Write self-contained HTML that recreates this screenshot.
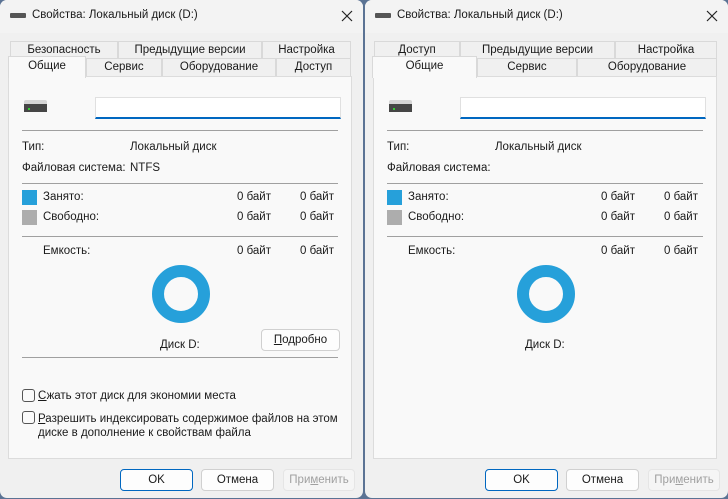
<!DOCTYPE html>
<html><head><meta charset="utf-8"><style>
*{margin:0;padding:0;box-sizing:border-box}
body{width:728px;height:499px;background:#5b7394;position:relative;overflow:hidden;font-family:"Liberation Sans","DejaVu Sans",sans-serif;font-size:11.5px;color:#1a1a1a}
.win{position:absolute;top:0;width:363px;height:498px;background:#f0f0f0;border-radius:7px;overflow:hidden}
.a{position:absolute;white-space:nowrap}
.tb{position:absolute;left:0;top:0;width:100%;height:33px;background:#f3f3f3}
.tab{position:absolute;height:18px;border:1px solid #d9d9d9;border-bottom:none;background:#f0f0f0;text-align:center;line-height:17px}
.sel{background:#f9f9f9;z-index:3;height:22px;line-height:19px}
.panel{position:absolute;left:8px;top:76px;width:344px;height:383px;background:#f9f9f9;border:1px solid #dcdcdc}
.hr{position:absolute;left:22px;width:316px;height:1px;background:#a0a0a0}
.btn{position:absolute;top:469px;height:22px;border:1px solid #d0d0d0;border-radius:4px;background:#fdfdfd;text-align:center;line-height:20px}
.r{text-align:right}
.cb{position:absolute;left:22px;width:13px;height:13px;border:1px solid #555;border-radius:3px;background:#fafafa}
</style></head><body>

<!-- LEFT WINDOW -->
<div class="win" style="left:0">
 <div class="tb"></div>
 <div class="a" style="left:10px;top:13px;width:16px;height:5px;background:#555;border-radius:1px"></div>
 <div class="a" style="left:32px;top:9px">Свойства: Локальный диск (D:)</div>
 <svg class="a" style="left:341px;top:10px" width="12" height="12"><path d="M1 1L11 11M11 1L1 11" stroke="#222" stroke-width="1.2"/></svg>
 <div class="tab" style="left:10px;top:41px;width:108px">Безопасность</div>
 <div class="tab" style="left:118px;top:41px;width:144px">Предыдущие версии</div>
 <div class="tab" style="left:262px;top:41px;width:89px">Настройка</div>
 <div class="tab" style="left:86px;top:58px;width:76px">Сервис</div>
 <div class="tab" style="left:162px;top:58px;width:114px">Оборудование</div>
 <div class="tab" style="left:276px;top:58px;width:75px">Доступ</div>
 <div class="tab sel" style="left:8px;top:56px;width:78px">Общие</div>
 <div class="panel"></div>
 <div class="a" style="left:24px;top:100px;width:23px;height:4px;background:#d6d6d6;border-radius:2px 2px 0 0"></div>
 <div class="a" style="left:24px;top:104px;width:23px;height:8px;background:#464646"></div>
 <div class="a" style="left:28px;top:108px;width:2px;height:2px;background:#3c3"></div>
 <div class="a" style="left:95px;top:97px;width:246px;height:22px;background:#fff;border:1px solid #e0e0e0;border-bottom:2px solid #0067c0"></div>
 <div class="hr" style="top:130px"></div>
 <div class="a" style="left:22px;top:141px">Тип:</div>
 <div class="a" style="left:130px;top:141px">Локальный диск</div>
 <div class="a" style="left:22px;top:162px">Файловая система:</div>
 <div class="a" style="left:130px;top:162px">NTFS</div>
 <div class="hr" style="top:183px"></div>
 <div class="a" style="left:22px;top:190px;width:15px;height:15px;background:#26a0da"></div>
 <div class="a" style="left:43px;top:191px">Занято:</div>
 <div class="a r" style="left:211px;top:191px;width:60px">0 байт</div>
 <div class="a r" style="left:274px;top:191px;width:60px">0 байт</div>
 <div class="a" style="left:22px;top:210px;width:15px;height:15px;background:#adadad"></div>
 <div class="a" style="left:43px;top:211px">Свободно:</div>
 <div class="a r" style="left:211px;top:211px;width:60px">0 байт</div>
 <div class="a r" style="left:274px;top:211px;width:60px">0 байт</div>
 <div class="hr" style="top:236px"></div>
 <div class="a" style="left:43px;top:245px">Емкость:</div>
 <div class="a r" style="left:211px;top:245px;width:60px">0 байт</div>
 <div class="a r" style="left:274px;top:245px;width:60px">0 байт</div>
 <div class="a" style="left:152px;top:265px;width:58px;height:58px;border-radius:50%;border:12px solid #26a0da"></div>
 <div class="a" style="left:160px;top:339px">Диск D:</div>
 <div class="a" style="left:261px;top:329px;width:79px;height:22px;border:1px solid #d0d0d0;border-radius:4px;background:#fdfdfd;text-align:center;line-height:20px"><u>П</u>одробно</div>
 <div class="hr" style="top:357px"></div>
 <div class="cb" style="top:389px"></div>
 <div class="a" style="left:38px;top:390px"><u>С</u>жать этот диск для экономии места</div>
 <div class="cb" style="top:411px"></div>
 <div class="a" style="left:38px;top:412px;line-height:14px"><u>Р</u>азрешить индексировать содержимое файлов на этом<br>диске в дополнение к свойствам файла</div>
 <div class="btn" style="left:120px;width:73px;border:1px solid #0067c0">OK</div>
 <div class="btn" style="left:201px;width:73px">Отмена</div>
 <div class="btn" style="left:283px;width:72px;color:#a0a0a0;background:#f5f5f5;border-color:#e5e5e5">При<u>м</u>енить</div>
</div>

<!-- RIGHT WINDOW -->
<div class="win" style="left:365px">
 <div class="tb"></div>
 <div class="a" style="left:10px;top:13px;width:16px;height:5px;background:#555;border-radius:1px"></div>
 <div class="a" style="left:32px;top:9px">Свойства: Локальный диск (D:)</div>
 <svg class="a" style="left:341px;top:10px" width="12" height="12"><path d="M1 1L11 11M11 1L1 11" stroke="#222" stroke-width="1.2"/></svg>
 <div class="tab" style="left:9px;top:41px;width:86px">Доступ</div>
 <div class="tab" style="left:95px;top:41px;width:155px">Предыдущие версии</div>
 <div class="tab" style="left:250px;top:41px;width:102px">Настройка</div>
 <div class="tab" style="left:112px;top:58px;width:100px">Сервис</div>
 <div class="tab" style="left:212px;top:58px;width:140px">Оборудование</div>
 <div class="tab sel" style="left:7px;top:56px;width:105px">Общие</div>
 <div class="panel"></div>
 <div class="a" style="left:24px;top:100px;width:23px;height:4px;background:#d6d6d6;border-radius:2px 2px 0 0"></div>
 <div class="a" style="left:24px;top:104px;width:23px;height:8px;background:#464646"></div>
 <div class="a" style="left:28px;top:108px;width:2px;height:2px;background:#3c3"></div>
 <div class="a" style="left:95px;top:97px;width:246px;height:22px;background:#fff;border:1px solid #e0e0e0;border-bottom:2px solid #0067c0"></div>
 <div class="hr" style="top:130px"></div>
 <div class="a" style="left:22px;top:141px">Тип:</div>
 <div class="a" style="left:130px;top:141px">Локальный диск</div>
 <div class="a" style="left:22px;top:162px">Файловая система:</div>
 <div class="hr" style="top:183px"></div>
 <div class="a" style="left:22px;top:190px;width:15px;height:15px;background:#26a0da"></div>
 <div class="a" style="left:43px;top:191px">Занято:</div>
 <div class="a r" style="left:210px;top:191px;width:60px">0 байт</div>
 <div class="a r" style="left:273px;top:191px;width:60px">0 байт</div>
 <div class="a" style="left:22px;top:210px;width:15px;height:15px;background:#adadad"></div>
 <div class="a" style="left:43px;top:211px">Свободно:</div>
 <div class="a r" style="left:210px;top:211px;width:60px">0 байт</div>
 <div class="a r" style="left:273px;top:211px;width:60px">0 байт</div>
 <div class="hr" style="top:236px"></div>
 <div class="a" style="left:43px;top:245px">Емкость:</div>
 <div class="a r" style="left:210px;top:245px;width:60px">0 байт</div>
 <div class="a r" style="left:273px;top:245px;width:60px">0 байт</div>
 <div class="a" style="left:152px;top:265px;width:58px;height:58px;border-radius:50%;border:12px solid #26a0da"></div>
 <div class="a" style="left:160px;top:339px">Диск D:</div>
 <div class="btn" style="left:120px;width:73px;border:1px solid #0067c0">OK</div>
 <div class="btn" style="left:201px;width:73px">Отмена</div>
 <div class="btn" style="left:283px;width:72px;color:#a0a0a0;background:#f5f5f5;border-color:#e5e5e5">При<u>м</u>енить</div>
</div>
</body></html>
